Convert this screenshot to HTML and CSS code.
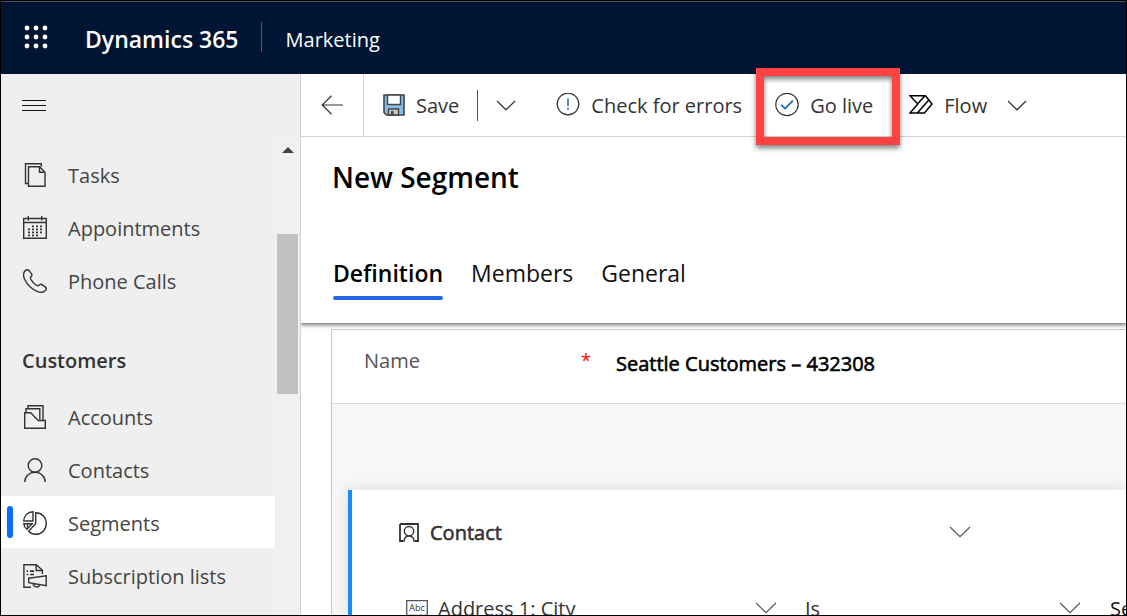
FILE: index.html
```html
<!DOCTYPE html>
<html lang="en">
<head>
<meta charset="utf-8">
<meta name="viewport" content="width=device-width, initial-scale=1">
<title>New Segment - Dynamics 365 Marketing</title>
<link rel="stylesheet" href="styles.css">
</head>
<body>
<div class="app">
  <header class="topbar">
    <button class="launcher" type="button" aria-label="App launcher">
      <svg width="24" height="24" viewBox="0 0 24 24" fill="#fff"><circle cx="3" cy="3" r="2.4"/><circle cx="12" cy="3" r="2.4"/><circle cx="21" cy="3" r="2.4"/><circle cx="3" cy="12" r="2.4"/><circle cx="12" cy="12" r="2.4"/><circle cx="21" cy="12" r="2.4"/><circle cx="3" cy="21" r="2.4"/><circle cx="12" cy="21" r="2.4"/><circle cx="21" cy="21" r="2.4"/></svg>
    </button>
    <a class="brand" href="#">Dynamics 365</a>
    <span class="topbar-rule"></span>
    <a class="area" href="#">Marketing</a>
  </header>

  <div class="body">
    <aside class="sidebar">
      <button class="menu-toggle" type="button" aria-label="Toggle navigation">
        <svg width="24" height="12" viewBox="0 0 24 12" stroke="#111" fill="none"><path d="M0 .5h24M0 5.500h24M0 10.500h24"/></svg>
      </button>
      <div class="nav-area">
        <nav class="nav">
          <ul class="nav-list">
            <li><a class="nav-item" href="#">
              <svg class="icon" viewBox="0 0 24 24"><path d="M5 20.500H2.500V.7h15.800v3"/><path d="M5.500 3.700h11l5.500 5.500v14H5.500z"/><path d="M16.500 3.700v5.500H22"/></svg>Tasks</a></li>
            <li><a class="nav-item" href="#">
              <svg class="icon" viewBox="0 0 24 24"><path d="M.7 2.500h22.600v19.800H.7zM.7 6.500h22.600M5.300 0v4.500M18.700 0v4.500"/><path stroke-dasharray="2 2" stroke-width="1.8" d="M9 10.300h12M5 13.300h16M5 16.300h16M5 19.300h12"/></svg>Appointments</a></li>
            <li><a class="nav-item" href="#">
              <svg class="icon" viewBox="0 0 24 24"><path d="M3.300.9C4.800.2 5.700.9 6.600 2.300L8.700 5.200C9.500 6.600 8.500 7.500 7.500 8.400 6.700 9.300 8 11 10.200 13.500c2.300 2.300 4 4 5.200 3.200 1-1 2-2 3.300-1.300l3.500 2.500c1.200 1 1.500 2 .6 3.200-1.800 2-4.800 3.100-8.600 1.300C9 20.200 3.800 15.100 1.600 10.300-.1 6.500.2 2.800 3.300.9z"/></svg>Phone Calls</a></li>
          </ul>
          <h2 class="nav-heading">Customers</h2>
          <ul class="nav-list">
            <li><a class="nav-item" href="#">
              <svg class="icon" viewBox="0 0 24 24"><path d="M5 3.500V.7h15V15M3 7.500V3.700h13.800v11"/><path d="M1.700 23.200V7.700h6l7.500 7.800h7.100v7.700z"/></svg>Accounts</a></li>
            <li><a class="nav-item" href="#">
              <svg class="icon" viewBox="0 0 24 24"><circle cx="12" cy="7.500" r="6.800"/><path d="M1.700 24c.3-6 4.500-9.700 10.300-9.700S22 18 22.300 24"/></svg>Contacts</a></li>
            <li><a class="nav-item nav-item-active" href="#" aria-current="page">
              <svg class="icon" viewBox="0 0 24 24"><path d="M12.700 1.700c6 0 10.600 4.700 10.600 10.800 0 6-4.700 10.800-10.500 10.800-2.900 0-5.400-1.200-7.200-3.100l7.100-7.500z"/><path d="M10 .7v9.300H.7C1 4.600 4.600 1 10 .7z"/><path d="M.8 12.700h8.400l-5.300 5.600C2.100 16.900 1 15 .8 12.700zM4.500 13v3.500"/></svg>Segments</a></li>
            <li><a class="nav-item" href="#">
              <svg class="icon" viewBox="0 0 24 24"><path d="M8 23.200H.9V.7h12.500l6 5.500V10"/><path d="M13.200.7v5.800h6"/><path stroke-width="1.700" d="M3.700 7.200h1.500M7 7.200h4M3.700 10.500h1.500M7 10.500h4"/><path d="M5.700 14.200l17.500-2.500v10L5.700 18.700zM10 19.800c.4 3.800 6 4.200 6.500 1"/></svg>Subscription lists</a></li>
          </ul>
        </nav>
        <div class="scrollbar" aria-hidden="true">
          <svg width="12" height="6" viewBox="0 0 12 6"><path d="M0 6L6 0l6 6z" fill="#444"/></svg>
          <span class="thumb"></span>
        </div>
      </div>
    </aside>

    <main class="main">
      <div class="commands">
        <button class="back" type="button" aria-label="Back">
          <svg class="stroke" width="22" height="20" viewBox="0 0 22 20"><path d="M22 10H1.200M10.500.8L1.200 10l9.300 9.200"/></svg>
        </button>
        <button class="command save" type="button">
          <svg width="22" height="22" viewBox="0 0 22 22"><path d="M1 1h20v20H3.500L1 18.500z" fill="#83beec" stroke="#444" stroke-width="1.600"/><path d="M4.500 1h13v9.500h-13z" fill="#fff" stroke="#444" stroke-width="1.400"/><path d="M5.500 21v-6h10v6z" fill="#c8c8c8" stroke="#444" stroke-width="1.400"/><path d="M8 17h2.500v4H8z" fill="#444"/></svg>
          Save
        </button>
        <span class="command-rule"></span>
        <button class="more" type="button" aria-label="More save options">
          <svg class="stroke" width="20" height="11" viewBox="0 0 20 11"><path d="M1 1l9 8.800L19 1"/></svg>
        </button>
        <button class="command check" type="button">
          <svg class="stroke" width="24" height="24" viewBox="0 0 24 24"><circle cx="12" cy="11" r="10.800"/><path d="M12 5.500v7.500M12 14.800v2" stroke="#2a5d8f" stroke-width="1.500"/></svg>
          Check for errors
        </button>
        <button class="command golive" type="button">
          <svg class="stroke" width="24" height="24" viewBox="0 0 24 24"><circle cx="12" cy="11.500" r="11.200"/><path d="M6.300 11.800l3.800 3.800 7.800-8" stroke="#1068b8" stroke-width="1.700"/></svg>
          Go live
          <span class="callout"></span>
        </button>
        <button class="command flow" type="button">
          <svg width="24" height="20" viewBox="0 0 24 20" fill="none" stroke="#000" stroke-width="1.500"><path d="M1 .8h15.500l6.500 8.200-7.600 8.900H1l7.800-8.900L1 .8zM8.500 9L16 .8M8.300 17.900L19.800 5"/></svg>
          Flow
        </button>
        <button class="more" type="button" aria-label="More flow options">
          <svg class="stroke" width="20" height="11" viewBox="0 0 20 11"><path d="M1 1l9 8.800L19 1"/></svg>
        </button>
      </div>

      <div class="record-head">
        <h1 class="title">New Segment</h1>
        <div class="tabs" role="tablist">
          <button class="tab tab-active" type="button" role="tab" aria-selected="true">Definition</button>
          <button class="tab" type="button" role="tab" aria-selected="false">Members</button>
          <button class="tab" type="button" role="tab" aria-selected="false">General</button>
        </div>
      </div>

      <form class="form">
        <div class="name-row">
          <label class="name-label" for="segment-name">Name</label>
          <span class="required" aria-hidden="true">*</span>
          <input class="name-input" id="segment-name" type="text" value="Seattle Customers – 432308" required>
        </div>
        <div class="canvas">
          <section class="query">
            <div class="entity-row">
              <svg class="icon-small" viewBox="0 0 20 19"><path d="M1 1h18v17h-3M1 1v17h3" stroke-width="1.800"/><path d="M1 18h4c.3-3.200 2-5 5-5s4.700 1.800 5 5h4"/><circle cx="10" cy="8.200" r="4.700"/></svg>
              <select class="picker entity" aria-label="Entity"><option>Contact</option></select>
              <svg class="chevron" width="22" height="12" viewBox="0 0 22 12"><path d="M1 1l10 9.700L21 1"/></svg>
            </div>
            <div class="condition-row">
              <div class="field attribute">
                <svg width="22" height="16" viewBox="0 0 22 16"><path d="M.7.700h20.600v14.600H.7z" fill="none" stroke="#555" stroke-width="1.300"/><text class="abc" x="11" y="11" text-anchor="middle">Abc</text></svg>
                <select class="picker" aria-label="Attribute"><option>Address 1: City</option></select>
                <svg class="chevron" width="22" height="12" viewBox="0 0 22 12"><path d="M1 1l10 9.700L21 1"/></svg>
              </div>
              <div class="field operator">
                <select class="picker" aria-label="Operator"><option>Is</option></select>
                <svg class="chevron" width="22" height="12" viewBox="0 0 22 12"><path d="M1 1l10 9.700L21 1"/></svg>
              </div>
              <input class="value" type="text" aria-label="Value" value="Seattle">
            </div>
          </section>
        </div>
      </form>
    </main>
  </div>
</div>
</body>
</html>
```
FILE: styles.css
```css
* {
  box-sizing: border-box;
}

body {
  margin: 0;
  font-family: "Segoe UI", "Open Sans", "Noto Sans", sans-serif;
  font-size: 20px;
  color: #333;
  background: #fff;
}

button,
input,
select {
  font: inherit;
  color: inherit;
  background: none;
  border: 0;
  border-radius: 0;
  margin: 0;
  padding: 0;
  appearance: none;
}

a {
  color: inherit;
  text-decoration: none;
}

svg {
  display: block;
  flex: none;
}

.app {
  display: flex;
  flex-direction: column;
  height: 100vh;
  border: 1px solid #000;
  overflow: hidden;
}

/* Top bar */
.topbar {
  display: flex;
  flex: none;
  align-items: center;
  height: 73px;
  padding: 2px 23px 0;
  border-top: 1px solid #4b5160;
  background: #001433;
  color: #fff;
}

.launcher {
  margin-top: -4px;
}

.brand {
  margin-left: 37px;
  font-size: 23px;
  font-weight: 600;
}

.topbar-rule {
  width: 1px;
  height: 30px;
  margin: -4px 24px 0 22px;
  background: #4b5a75;
}

.area {
  font-size: 20px;
}

.body {
  display: flex;
  flex: 1;
  min-height: 0;
}

/* Sidebar */
.sidebar {
  display: flex;
  flex: none;
  flex-direction: column;
  width: 300px;
  border-right: 1px solid #d2d2d2;
  background: #efefef;
}

.menu-toggle {
  display: flex;
  flex: none;
  align-items: center;
  height: 62px;
  padding: 2px 0 0 21px;
}

.nav-area {
  display: flex;
  flex: 1;
  min-height: 0;
}

.nav {
  flex: 1;
  padding-top: 12px;
}

.nav-list {
  display: grid;
  gap: 1px;
  margin: 0;
  padding: 0;
  list-style: none;
}

.nav-item {
  display: flex;
  align-items: center;
  gap: 21px;
  height: 52px;
  padding: 2px 0 0 22px;
  color: #444;
}

.nav-item-active {
  position: relative;
  background: #fff;
}

.nav-item-active::before {
  content: "";
  position: absolute;
  top: 10px;
  left: 6px;
  width: 6px;
  height: 32px;
  border-radius: 3px;
  background: #0b6bff;
}

.icon,
.icon-small {
  width: 24px;
  height: 24px;
  fill: none;
  stroke: #333;
  stroke-width: 1.4px;
}

.nav-heading {
  margin: 0;
  padding: 41px 21px 15px;
  font-size: 20px;
  font-weight: 600;
  line-height: 28px;
}

.scrollbar {
  display: flex;
  flex-direction: column;
  align-items: center;
  width: 25px;
  padding-top: 11px;
  background: #f0f0f0;
}

.thumb {
  width: 21px;
  height: 160px;
  margin-top: 81px;
  background: #c1c1c1;
}

/* Command bar */
.main {
  display: flex;
  flex: 1;
  flex-direction: column;
  min-width: 0;
}

.commands {
  display: flex;
  flex: none;
  align-items: center;
  height: 63px;
  border-bottom: 1px solid #d2d2d2;
}

.back {
  display: flex;
  align-items: center;
  align-self: stretch;
  justify-content: center;
  width: 63px;
  border-right: 1px solid #d2d2d2;
}

.stroke {
  fill: none;
  stroke: #333;
  stroke-width: 1.2px;
}

.command {
  display: flex;
  flex: none;
  align-items: center;
  gap: 11px;
  white-space: nowrap;
}

.save {
  margin-left: 19px;
}

.command-rule {
  width: 1px;
  height: 31px;
  margin: 0 18px;
  background: #555;
}

.check {
  margin-left: 40px;
}

.golive {
  position: relative;
  margin-left: 33px;
}

.callout {
  position: absolute;
  top: -24px;
  right: -27px;
  bottom: -26px;
  left: -19px;
  border: 8px solid #ff4343;
  box-shadow: 0 3px 5px rgba(0, 0, 0, 0.5), inset 0 3px 5px rgba(0, 0, 0, 0.5);
}

.flow {
  margin: 0 20px 0 36px;
}

/* Record header */
.record-head {
  position: relative;
  flex: none;
  padding: 20px 31px 23px;
  box-shadow: 0 1px 4px 1px rgba(0, 0, 0, 0.55);
  clip-path: inset(0 0 -8px 0);
}

.title {
  margin: 0;
  font-size: 28px;
  font-weight: 600;
  line-height: 40px;
  color: #000;
}

.tabs {
  display: flex;
  gap: 28px;
  margin: 55px 0 0 1px;
}

.tab {
  height: 48px;
  padding-bottom: 2px;
  border-bottom: 4px solid transparent;
  font-size: 23px;
  line-height: 40px;
  color: #111;
}

.tab-active {
  position: relative;
  font-weight: 600;
  color: #000;
}

.tab-active::after {
  content: "";
  position: absolute;
  right: 0;
  bottom: -4px;
  left: 0;
  height: 4px;
  border-radius: 2px;
  background: #2266e3;
}

/* Form */
.form {
  display: flex;
  flex: 1;
  flex-direction: column;
  min-height: 0;
  margin: 6px 0 0 30px;
  border-top: 1px solid #c8c8c8;
  border-left: 1px solid #c8c8c8;
}

.name-row {
  display: flex;
  flex: none;
  align-items: center;
  height: 74px;
  padding: 0 32px;
  border-bottom: 1px solid #d8d8d8;
}

.name-label {
  width: 217px;
  padding-bottom: 12px;
  color: #555;
}

.required {
  width: 35px;
  padding-bottom: 14px;
  font-size: 18px;
  color: #f00;
}

.name-input {
  flex: 1;
  min-width: 0;
  padding-bottom: 6px;
  color: #000;
  -webkit-text-stroke: 0.6px #000;
}

.canvas {
  flex: 1;
  min-height: 0;
  padding: 86px 0 0 16px;
  background: #f7f7f7;
}

.query {
  height: 100%;
  padding-top: 24px;
  border-left: 4px solid #168cff;
  background: #fff;
  box-shadow: 0 0 14px rgba(0, 0, 0, 0.12);
}

.entity-row {
  display: flex;
  align-items: center;
  gap: 11px;
  width: 572px;
  height: 36px;
  margin-left: 47px;
}

.entity-row .chevron {
  margin-left: auto;
}

.icon-small {
  width: 20px;
  height: 19px;
}

.picker {
  flex: 1;
  min-width: 0;
}

.entity {
  -webkit-text-stroke: 0.6px #333;
}

.chevron {
  fill: none;
  stroke: #555;
  stroke-width: 1.2px;
  pointer-events: none;
}

.condition-row {
  display: flex;
  align-items: center;
  height: 36px;
  margin: 40px 0 0 54px;
}

.field {
  display: flex;
  flex: none;
  align-items: center;
  gap: 10px;
}

.attribute {
  width: 371px;
}

.operator {
  width: 276px;
  margin-left: 28px;
}

.abc {
  font-size: 9px;
  fill: #333;
}

.value {
  flex: 1;
  min-width: 0;
  margin-left: 29px;
  color: #111;
}
```
